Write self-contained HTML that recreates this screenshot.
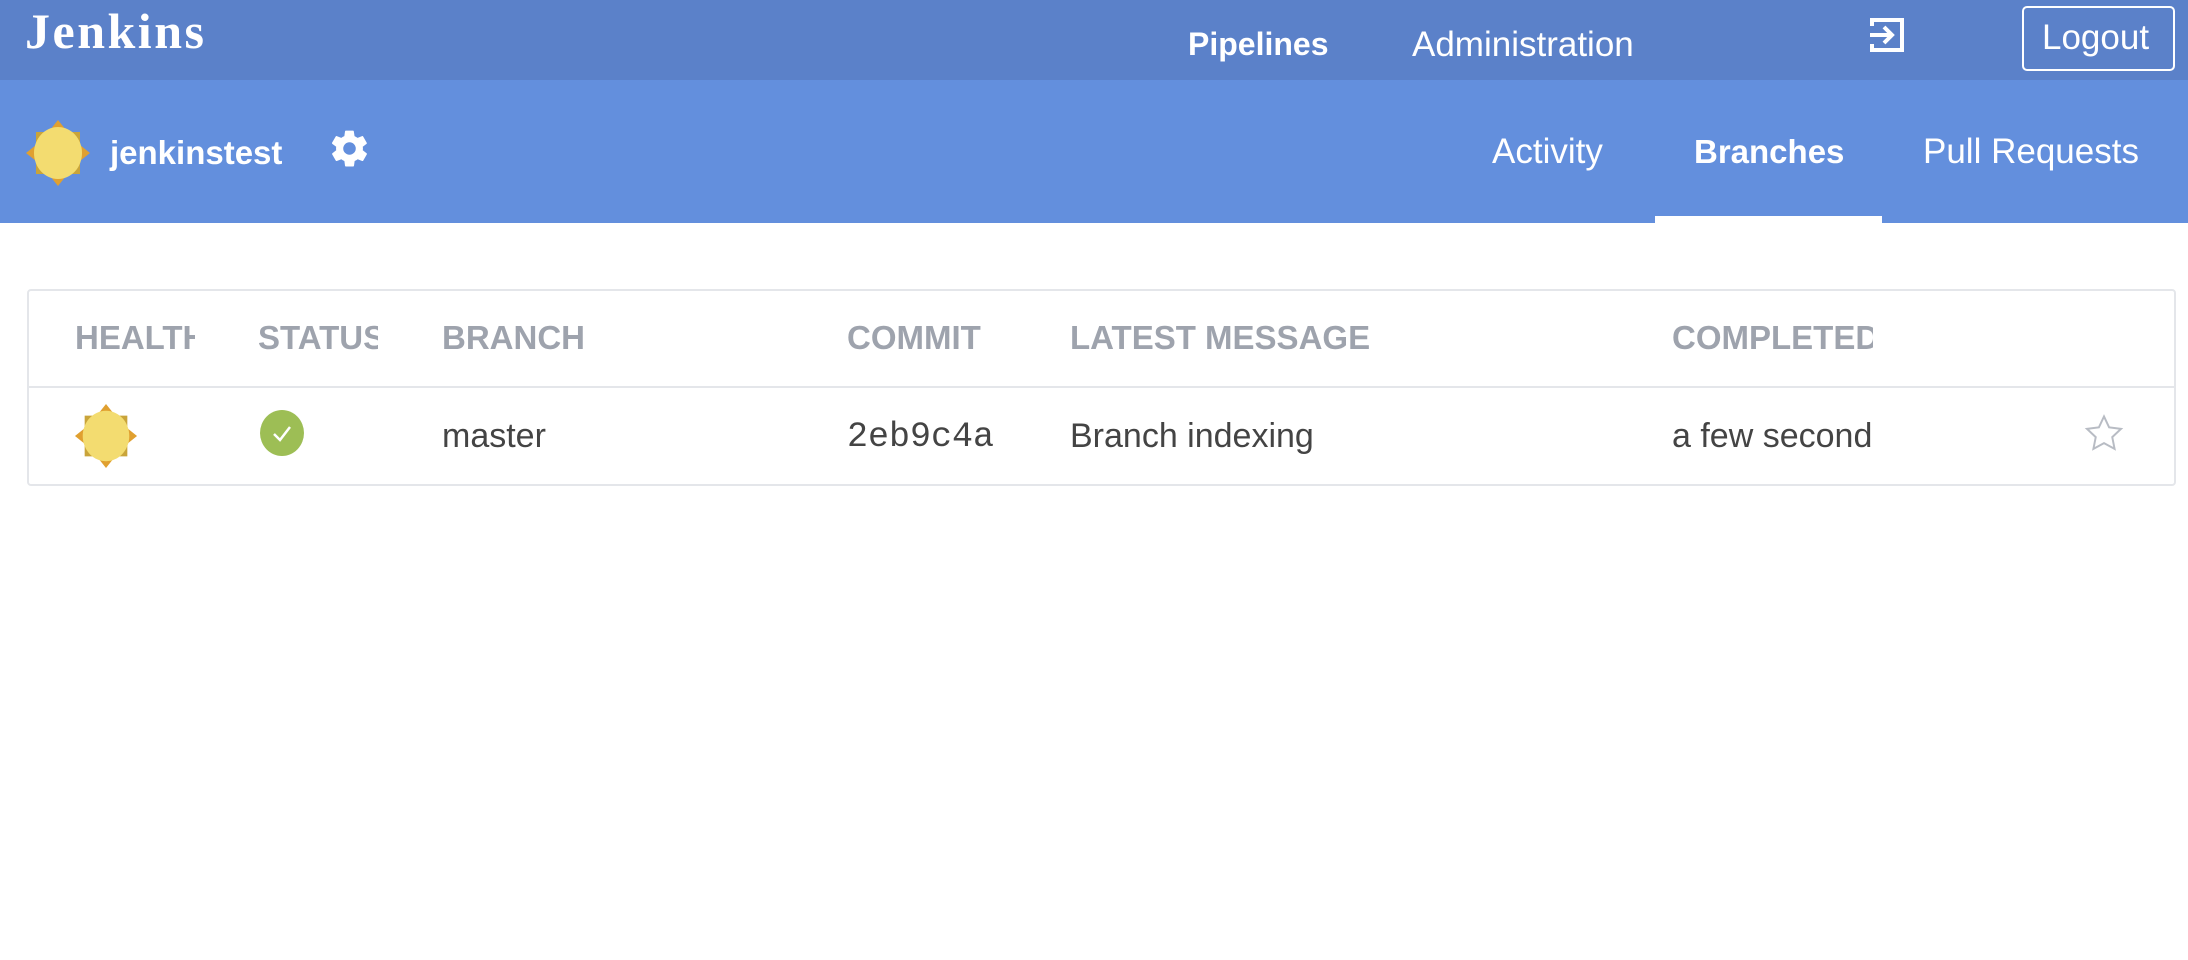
<!DOCTYPE html>
<html><head><meta charset="utf-8"><style>
*{margin:0;padding:0;box-sizing:border-box}
body{width:2188px;height:960px;background:#fff;font-family:"Liberation Sans",sans-serif;position:relative;overflow:hidden}
.a{position:absolute;white-space:nowrap}
.top{left:0;top:0;width:2188px;height:80px;background:#5b81c9}
.sub{left:0;top:80px;width:2188px;height:143px;background:#638fdd}
.w{color:#fff}
.h{color:#9ea3ad;font-weight:bold;font-size:33px;top:319px;overflow:hidden}
.c{color:#444;font-size:34px;top:417px;overflow:hidden}
</style></head><body>
<div class="a top"></div>
<div class="a sub"></div>
<div class="a w" style="left:25px;top:2px;font-family:'Liberation Serif',serif;font-weight:bold;font-size:50px;letter-spacing:2.5px">Jenkins</div>
<div class="a w" style="left:1188px;top:26px;font-size:32px;font-weight:bold">Pipelines</div>
<div class="a w" style="left:1412px;top:25px;font-size:35px">Administration</div>
<svg class="a" style="left:1868px;top:16px" width="40" height="38" viewBox="0 0 40 38"><path d="M4 10V4h30v30H4v-6" fill="none" stroke="#fff" stroke-width="4"/><path d="M2 19h22M16 11l8 8-8 8" fill="none" stroke="#fff" stroke-width="4"/></svg>
<div class="a" style="left:2022px;top:6px;width:153px;height:65px;border:2px solid #fff;border-radius:5px"></div>
<div class="a w" style="left:2042px;top:18px;font-size:35px">Logout</div>
<svg class="a" style="left:26px;top:120px" width="64" height="66" viewBox="0 0 64 66"><polygon points="32,0 40,10 32,20 24,10" fill="#e0a030"/><polygon points="32,66 40,56 32,46 24,56" fill="#e0a030"/><polygon points="0,33 10,25 20,33 10,41" fill="#e0a030"/><polygon points="64,33 54,25 44,33 54,41" fill="#e0a030"/><rect x="10" y="12" width="44" height="42" fill="#c9a43a"/><ellipse cx="32" cy="33" rx="24" ry="26" fill="#f3dc70"/></svg>
<div class="a w" style="left:110px;top:134px;font-size:33px;font-weight:bold">jenkinstest</div>
<svg class="a" style="left:328px;top:127px" width="43" height="43" viewBox="0 0 24 24"><path fill="#fff" d="M19.4 13c.04-.3.1-.6.1-1s-.04-.7-.1-1l2.1-1.6c.2-.15.24-.42.12-.64l-2-3.46c-.12-.22-.4-.3-.6-.22l-2.5 1c-.5-.4-1.1-.7-1.7-1l-.4-2.6C14.4 2.2 14.2 2 14 2h-4c-.25 0-.46.18-.5.42l-.38 2.650c-.6.25-1.17.6-1.7 1L4.9 5.07c-.22-.08-.5 0-.6.22l-2 3.46c-.13.22-.07.5.12.64L4.57 11c-.04.3-.07.66-.07 1s.03.7.07 1l-2.1 1.65c-.2.15-.25.42-.13.64l2 3.46c.12.22.4.3.6.22l2.5-1c.52.4 1.080.73 1.7 1l.37 2.65c.04.24.25.42.5.42h4c.25 0 .46-.18.5-.42l.37-2.65c.6-.25 1.17-.6 1.7-1l2.48 1c.23.08.5 0 .6-.22l2-3.46c.13-.22.07-.5-.12-.64zM12 15.5a3.5 3.5 0 1 1 0-7 3.5 3.5 0 0 1 0 7z"/></svg>
<div class="a w" style="left:1492px;top:132px;font-size:35px">Activity</div>
<div class="a w" style="left:1694px;top:133px;font-size:33px;font-weight:bold">Branches</div>
<div class="a w" style="left:1923px;top:132px;font-size:35px">Pull Requests</div>
<div class="a" style="left:1655px;top:216px;width:227px;height:7px;background:#fff"></div>
<div class="a" style="left:27px;top:289px;width:2149px;height:197px;border:2px solid #e4e6ea;border-radius:4px"></div>
<div class="a" style="left:28px;top:386px;width:2147px;height:2px;background:#e4e6ea"></div>
<div class="a h" style="left:75px;width:120px">HEALTH</div>
<div class="a h" style="left:258px;width:120px">STATUS</div>
<div class="a h" style="left:442px">BRANCH</div>
<div class="a h" style="left:847px">COMMIT</div>
<div class="a h" style="left:1070px">LATEST MESSAGE</div>
<div class="a h" style="left:1672px;width:201px">COMPLETED</div>
<svg class="a" style="left:74px;top:404px" width="64" height="64" viewBox="0 0 64 66"><polygon points="32,0 40,10 32,20 24,10" fill="#e0a030"/><polygon points="32,66 40,56 32,46 24,56" fill="#e0a030"/><polygon points="0,33 10,25 20,33 10,41" fill="#e0a030"/><polygon points="64,33 54,25 44,33 54,41" fill="#e0a030"/><rect x="10" y="12" width="44" height="42" fill="#c9a43a"/><ellipse cx="32" cy="33" rx="24" ry="26" fill="#f3dc70"/></svg>
<svg class="a" style="left:260px;top:410px" width="44" height="46" viewBox="0 0 44 46"><ellipse cx="22" cy="23" rx="22" ry="23" fill="#9dbe55"/><path d="M14 24l6 6 10-13" fill="none" stroke="#fff" stroke-width="2.5"/></svg>
<div class="a c" style="left:442px">master</div>
<div class="a c" style="left:847px;font-family:'Liberation Mono',monospace;font-size:35px">2eb9c4a</div>
<div class="a c" style="left:1070px">Branch indexing</div>
<div class="a c" style="left:1672px;width:201px">a few seconds ago</div>
<svg class="a" style="left:2084px;top:414px" width="40" height="38" viewBox="0 0 24 23"><path d="M12 1.5l3.1 6.6 7.2.9-5.3 5 1.4 7.1L12 17.6l-6.4 3.5L7 14l-5.3-5 7.2-.9z" fill="none" stroke="#b8bcc4" stroke-width="1.2"/></svg>
</body></html>
